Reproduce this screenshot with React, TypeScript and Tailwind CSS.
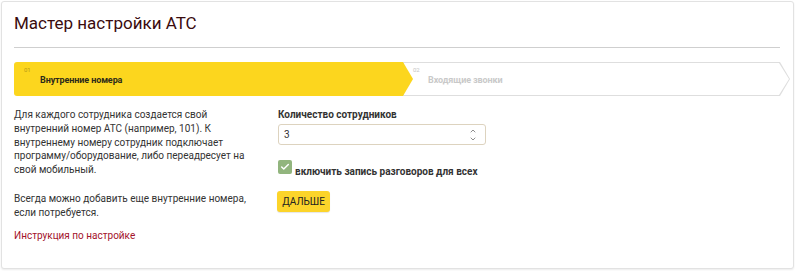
import { ChevronUp, ChevronDown, Check } from "lucide-react";

export default function App() {
  const arrow =
    "[clip-path:polygon(0_0,calc(100%_-_10px)_0,100%_50%,calc(100%_-_10px)_100%,0_100%)]";

  return (
    <div className="min-h-screen bg-white p-px font-['Roboto',sans-serif]">
      <div className="h-[268px] w-[793px] rounded-[3px] border border-[#e2e2e2] bg-white px-[12px] pt-[7px] shadow-[0_1px_2px_rgba(0,0,0,0.08)]">
        <h1 className="text-[17px] leading-[28px] text-[#3a0b0e]">Мастер настройки АТС</h1>
        <div className="mt-[10px] h-px w-[766px] bg-[#cfcfcf]" />

        {/* steps */}
        <div className="mt-[14px] flex h-[34px] w-[776px]">
          <div
            className={`relative z-10 h-full w-[399px] shrink-0 rounded-l-[3px] bg-[#fcd61e] ${arrow}`}
          >
            <span className="absolute left-[10px] top-[3px] text-[6px] text-[#b89a17]">01</span>
            <span className="absolute left-[26px] top-[12px] text-[9px] font-bold leading-[12px] tracking-[-0.1px] text-[#2d2a1a]">
              Внутренние номера
            </span>
          </div>
          <div className={`-ml-[10px] h-full w-[387px] shrink-0 bg-[#dedede] p-px ${arrow}`}>
            <div className={`relative h-full w-full bg-white ${arrow}`}>
              <span className="absolute left-[9px] top-[2px] text-[6px] text-[#c4c4c4]">02</span>
              <span className="absolute left-[24px] top-[11px] text-[9px] font-bold leading-[12px] tracking-[-0.1px] text-[#c9c9c9]">
                Входящие звонки
              </span>
            </div>
          </div>
        </div>

        {/* content */}
        <div className="mt-[12px] flex">
          <div className="w-[264px] shrink-0 pr-[30px] text-[10px] leading-[13.75px] text-[#333]">
            <p>
              Для каждого сотрудника создается свой внутренний номер АТС (например, 101). К внутреннему номеру
              сотрудник подключает программу/оборудование, либо переадресует на свой мобильный.
            </p>
            <p className="mt-[15px]">Всегда можно добавить еще внутренние номера, если потребуется.</p>
            <p className="mt-[10px] text-[#a3122b]">Инструкция по настройке</p>
          </div>

          <div className="w-[260px]">
            <div className="text-[10px] font-bold leading-[13px] text-[#333]">Количество сотрудников</div>
            <div className="mt-[3px] flex h-[21px] w-[208px] items-center justify-between rounded-[3px] border border-[#ddd3bf] pl-[5px] pr-[8px]">
              <span className="text-[10px] text-[#333]">3</span>
              <div className="flex flex-col text-[#555]">
                <ChevronUp size={8} strokeWidth={2} />
                <ChevronDown size={8} strokeWidth={2} />
              </div>
            </div>

            <div className="mt-[15px] flex items-end gap-[3px]">
              <div className="flex h-[14px] w-[14px] items-center justify-center rounded-[2px] bg-[#92b57e]">
                <Check size={10} strokeWidth={3.5} className="text-white" />
              </div>
              <span className="translate-y-[3px] whitespace-nowrap text-[10px] font-bold leading-[11px] text-[#333]">
                включить запись разговоров для всех
              </span>
            </div>

            <button className="-ml-px mt-[17px] h-[21px] w-[53px] rounded-[3px] bg-[#fcd42a] text-[10px] text-[#222] shadow-[0_1px_1px_rgba(0,0,0,0.1)]">
              ДАЛЬШЕ
            </button>
          </div>
        </div>
      </div>
    </div>
  );
}
